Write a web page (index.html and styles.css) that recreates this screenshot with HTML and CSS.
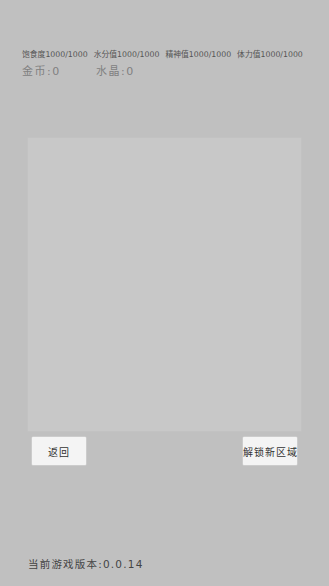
FILE: index.html
```html
<!DOCTYPE html>
<html lang="zh">
<head>
<meta charset="utf-8">
<link rel="stylesheet" href="styles.css">
</head>
<body>
<div class="screen">
  <div class="stats">
    <span>饱食度1000/1000</span>
    <span>水分值1000/1000</span>
    <span>精神值1000/1000</span>
    <span>体力值1000/1000</span>
  </div>
  <div class="money">
    <span class="coin">金币:0</span>
    <span class="crystal">水晶:0</span>
  </div>
  <div class="panel"></div>
  <div class="actions">
    <button class="btn">返回</button>
    <button class="btn">解锁新区域</button>
  </div>
  <div class="version">当前游戏版本:0.0.14</div>
</div>
</body>
</html>
```
FILE: styles.css
```css
html, body {
  margin: 0;
  padding: 0;
  background: #c0c0c0;
}
.screen {
  width: 329px;
  height: 586px;
  display: flex;
  flex-direction: column;
  font-family: "DejaVu Sans", "Noto Sans CJK SC", sans-serif;
  color: #555;
}
.stats {
  display: flex;
  gap: 6px;
  margin-top: 50px;
  padding-left: 22px;
  font-size: 7.8px;
  line-height: 10px;
  color: #555;
  white-space: nowrap;
}
.money {
  display: flex;
  margin-top: 5px;
  padding-left: 22px;
  font-size: 11px;
  line-height: 14px;
  letter-spacing: 1.5px;
  color: #808080;
}
.coin {
  width: 74px;
}
.panel {
  margin: 59px 28px 0 28px;
  height: 293px;
  background: #c8c8c8;
  box-shadow: 0 0 0 0.5px #c4c4c4;
}
.actions {
  display: flex;
  justify-content: space-between;
  margin: 6px 32px 0 32px;
}
.btn {
  width: 54px;
  height: 28px;
  padding: 0;
  border: none;
  border-radius: 1px;
  background: #f4f4f4;
  box-shadow: 0 0 0 0.5px #d8d8d8;
  font-family: "DejaVu Sans", "Noto Sans CJK SC", sans-serif;
  font-size: 10px;
  letter-spacing: 1px;
  color: #333;
  white-space: nowrap;
  overflow: visible;
}
.version {
  margin-top: 92px;
  padding-left: 28px;
  font-size: 10.5px;
  line-height: 14px;
  letter-spacing: 1.2px;
  color: #444;
}
```
